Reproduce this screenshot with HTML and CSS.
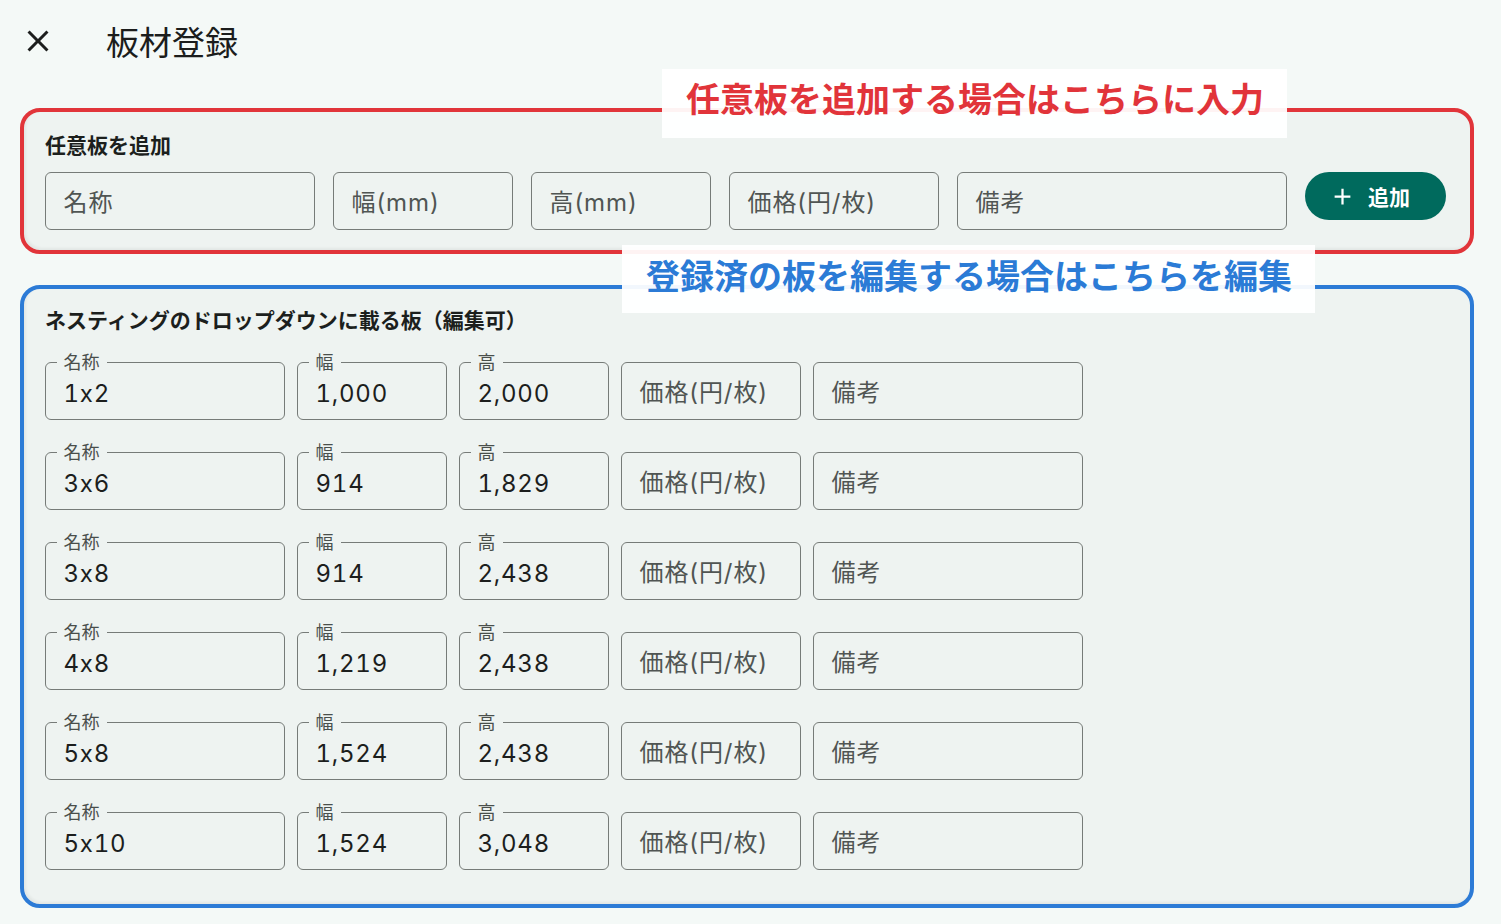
FILE: index.html
```html
<!DOCTYPE html>
<html lang="ja">
<head>
    <meta charset="UTF-8">
    <meta name="viewport" content="width=device-width, initial-scale=1.0">
    <title>板材登録</title>
    <link rel="stylesheet" href="styles.css">
</head>
<body>
    <header class="app-bar">
        <button class="icon-btn" aria-label="閉じる">
            <svg viewBox="0 0 24 24" width="36" height="36"><path d="M19 6.41 17.59 5 12 10.59 6.41 5 5 6.41 10.59 12 5 17.59 6.41 19 12 13.41 17.59 19 19 17.59 13.41 12z"/></svg>
        </button>
        <h1 class="page-title">板材登録</h1>
    </header>

    <main class="content">
        <!-- 任意板の追加 -->
        <section class="card card-add">
            <h2 class="card-title">任意板を追加</h2>
            <div class="add-row">
                <div class="field add-name"><span class="placeholder">名称</span></div>
                <div class="field add-size"><span class="placeholder">幅(mm)</span></div>
                <div class="field add-size"><span class="placeholder">高(mm)</span></div>
                <div class="field add-price"><span class="placeholder">価格(円/枚)</span></div>
                <div class="field add-note"><span class="placeholder">備考</span></div>
                <button class="add-btn">
                    <svg viewBox="0 0 24 24" width="27" height="27"><path d="M19 13h-6v6h-2v-6H5v-2h6V5h2v6h6v2z"/></svg>
                    <span>追加</span>
                </button>
            </div>
        </section>

        <!-- 登録済の板 -->
        <section class="card card-list">
            <h2 class="card-title">ネスティングのドロップダウンに載る板（編集可）</h2>
            <div class="board-list">
                <div class="board-row">
                    <fieldset class="field col-name"><legend>名称</legend><span class="value">1x2</span></fieldset>
                    <fieldset class="field col-size"><legend>幅</legend><span class="value">1,000</span></fieldset>
                    <fieldset class="field col-size"><legend>高</legend><span class="value">2,000</span></fieldset>
                    <div class="field col-price"><span class="placeholder">価格(円/枚)</span></div>
                    <div class="field col-note"><span class="placeholder">備考</span></div>
                </div>
                <div class="board-row">
                    <fieldset class="field col-name"><legend>名称</legend><span class="value">3x6</span></fieldset>
                    <fieldset class="field col-size"><legend>幅</legend><span class="value">914</span></fieldset>
                    <fieldset class="field col-size"><legend>高</legend><span class="value">1,829</span></fieldset>
                    <div class="field col-price"><span class="placeholder">価格(円/枚)</span></div>
                    <div class="field col-note"><span class="placeholder">備考</span></div>
                </div>
                <div class="board-row">
                    <fieldset class="field col-name"><legend>名称</legend><span class="value">3x8</span></fieldset>
                    <fieldset class="field col-size"><legend>幅</legend><span class="value">914</span></fieldset>
                    <fieldset class="field col-size"><legend>高</legend><span class="value">2,438</span></fieldset>
                    <div class="field col-price"><span class="placeholder">価格(円/枚)</span></div>
                    <div class="field col-note"><span class="placeholder">備考</span></div>
                </div>
                <div class="board-row">
                    <fieldset class="field col-name"><legend>名称</legend><span class="value">4x8</span></fieldset>
                    <fieldset class="field col-size"><legend>幅</legend><span class="value">1,219</span></fieldset>
                    <fieldset class="field col-size"><legend>高</legend><span class="value">2,438</span></fieldset>
                    <div class="field col-price"><span class="placeholder">価格(円/枚)</span></div>
                    <div class="field col-note"><span class="placeholder">備考</span></div>
                </div>
                <div class="board-row">
                    <fieldset class="field col-name"><legend>名称</legend><span class="value">5x8</span></fieldset>
                    <fieldset class="field col-size"><legend>幅</legend><span class="value">1,524</span></fieldset>
                    <fieldset class="field col-size"><legend>高</legend><span class="value">2,438</span></fieldset>
                    <div class="field col-price"><span class="placeholder">価格(円/枚)</span></div>
                    <div class="field col-note"><span class="placeholder">備考</span></div>
                </div>
                <div class="board-row">
                    <fieldset class="field col-name"><legend>名称</legend><span class="value">5x10</span></fieldset>
                    <fieldset class="field col-size"><legend>幅</legend><span class="value">1,524</span></fieldset>
                    <fieldset class="field col-size"><legend>高</legend><span class="value">3,048</span></fieldset>
                    <div class="field col-price"><span class="placeholder">価格(円/枚)</span></div>
                    <div class="field col-note"><span class="placeholder">備考</span></div>
                </div>
            </div>
        </section>

        <!-- 注釈 -->
        <div class="callout callout-red">任意板を追加する場合はこちらに入力</div>
        <div class="callout callout-blue">登録済の板を編集する場合はこちらを編集</div>
    </main>
</body>
</html>
```

FILE: styles.css
```css
* {
    margin: 0;
    padding: 0;
    box-sizing: border-box;
}

body {
    font-family: Inter, 'Noto Sans CJK JP', sans-serif;
    background: #f4f9f7;
    color: #1a1c1b;
    min-height: 100vh;
}

.app-bar {
    display: flex;
    align-items: center;
    gap: 50px;
    height: 82px;
    padding-left: 20px;
}

.icon-btn {
    width: 36px;
    height: 36px;
    border: none;
    background: none;
    display: flex;
    cursor: pointer;
}

.icon-btn svg {
    fill: #1c1e1d;
}

.page-title {
    font-size: 33px;
    font-weight: 400;
    line-height: 44px;
    padding-top: 3px;
    color: #1b1d1c;
}

.content {
    position: relative;
    padding: 26px 27px 0 20px;
}

.card {
    background: #eef3f1;
    border: 4px solid;
    border-radius: 20px;
    box-shadow: inset 2px -2px 3px rgba(0, 0, 0, 0.05);
}

.card-add {
    border-color: #e1353a;
    padding: 20px 21px 19.5px;
}

.card-list {
    border-color: #2c7bd6;
    margin-top: 31px;
    padding: 18px 21px 34px;
}

.card-title {
    font-size: 21px;
    font-weight: 700;
    line-height: 28px;
    color: #1c1f1d;
}

/* inputs */
.field {
    flex: none;
    margin: 0;
    height: 58px;
    border: 1.5px solid #767b78;
    border-radius: 6px;
    padding: 0 18px 0 17.5px;
    min-width: 0;
}

.placeholder {
    display: block;
    font-size: 24px;
    letter-spacing: 0.9px;
    line-height: 52px;
    padding-top: 4px;
    color: #505553;
}

fieldset.field {
    height: 66px;
}

.field legend {
    font-size: 18px;
    line-height: 18px;
    padding: 0 7px;
    margin-left: -7px;
    color: #4a4f4c;
}

.value {
    display: block;
    font-size: 24px;
    letter-spacing: 0.75px;
    font-variant-numeric: tabular-nums;
    line-height: 43px;
    color: #1c1e1d;
}

.add-row {
    display: flex;
    align-items: flex-start;
    gap: 18px;
    margin-top: 12px;
}

.add-name { width: 270px; }
.add-size { width: 180px; }
.add-price { width: 210px; }
.add-note { width: 330px; }

.add-btn {
    display: flex;
    align-items: center;
    gap: 12px;
    height: 48px;
    padding: 0 36px 0 24px;
    border: none;
    border-radius: 24px;
    background: #006a5d;
    color: #fff;
    font-family: inherit;
    font-size: 21px;
    font-weight: 700;
    cursor: pointer;
}

.add-btn svg {
    fill: #fff;
}

.board-list {
    display: flex;
    flex-direction: column;
    gap: 24px;
    margin-top: 19px;
}

.board-row {
    display: flex;
    align-items: flex-end;
    gap: 12px;
}

.col-name { width: 240px; }
.col-size { width: 150px; }
.col-price { width: 180px; }
.col-note { width: 270px; }

/* annotations */
.callout {
    position: absolute;
    height: 69px;
    padding: 0 23px 0 24px;
    background: rgba(255, 255, 255, 0.94);
    font-family: 'Noto Sans CJK JP', sans-serif;
    font-size: 34px;
    font-weight: 700;
    line-height: 46px;
    white-space: nowrap;
}

.callout-red {
    top: -13px;
    left: 662px;
    padding-top: 5.5px;
    color: #e1343a;
}

.callout-blue {
    top: 163px;
    left: 622px;
    height: 68px;
    padding-top: 6.5px;
    color: #2b7bd6;
}
```
